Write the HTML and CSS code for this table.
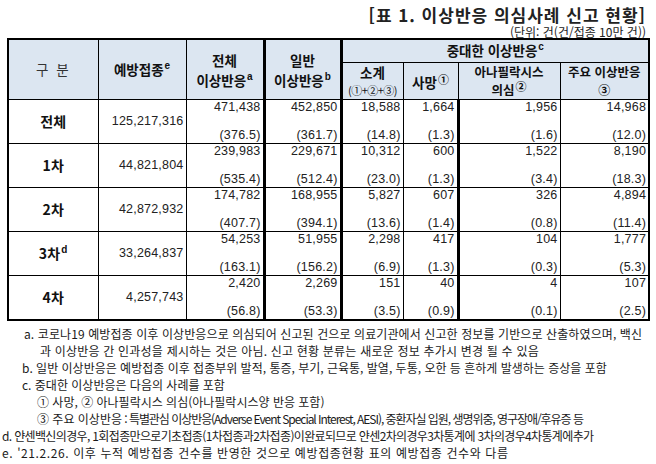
FILE: index.html
```html
<!DOCTYPE html>
<html lang="ko">
<head>
<meta charset="utf-8">
<title>이상반응 의심사례 신고 현황</title>
<link rel="stylesheet" href="styles.css">
</head>
<body>
<div class="page">
  <div class="title">[표 1. 이상반응 의심사례 신고 현황]</div>
  <div class="unit">(단위: 건(건/접종 10만 건))</div>
  <table class="tbl">
    <colgroup>
      <col class="w1"><col class="w2"><col class="w3"><col class="w4">
      <col class="w5"><col class="w6"><col class="w7"><col class="w8">
    </colgroup>
    <thead>
      <tr class="h1">
        <th rowspan="2" class="plain">구 분</th>
        <th rowspan="2">예방접종<sup>e</sup></th>
        <th rowspan="2" class="tr two">전체<br>이상반응<sup>a</sup></th>
        <th rowspan="2" class="tr two">일반<br>이상반응<sup>b</sup></th>
        <th colspan="4" class="major">중대한 이상반응<sup>c</sup></th>
      </tr>
      <tr class="h2">
        <th class="sub"><span class="sub1">소계</span><span class="small">(①+②+③)</span></th>
        <th class="lo">사망<sup class="circ">①</sup></th>
        <th class="top">아나필락시스<br>의심<sup class="circ">②</sup></th>
        <th class="top">주요 이상반응<br><span class="circ2">③</span></th>
      </tr>
    </thead>
    <tbody>
      <tr>
        <td class="lbl">전체</td>
        <td class="tot">125,217,316</td>
        <td class="tr"><div class="n">471,438</div><div class="p">(376.5)</div></td>
        <td class="tr"><div class="n">452,850</div><div class="p">(361.7)</div></td>
        <td><div class="n">18,588</div><div class="p">(14.8)</div></td>
        <td class="tr"><div class="n">1,664</div><div class="p">(1.3)</div></td>
        <td><div class="n">1,956</div><div class="p">(1.6)</div></td>
        <td><div class="n">14,968</div><div class="p">(12.0)</div></td>
      </tr>
      <tr>
        <td class="lbl">1차</td>
        <td class="tot">44,821,804</td>
        <td class="tr"><div class="n">239,983</div><div class="p">(535.4)</div></td>
        <td class="tr"><div class="n">229,671</div><div class="p">(512.4)</div></td>
        <td><div class="n">10,312</div><div class="p">(23.0)</div></td>
        <td class="tr"><div class="n">600</div><div class="p">(1.3)</div></td>
        <td><div class="n">1,522</div><div class="p">(3.4)</div></td>
        <td><div class="n">8,190</div><div class="p">(18.3)</div></td>
      </tr>
      <tr>
        <td class="lbl">2차</td>
        <td class="tot">42,872,932</td>
        <td class="tr"><div class="n">174,782</div><div class="p">(407.7)</div></td>
        <td class="tr"><div class="n">168,955</div><div class="p">(394.1)</div></td>
        <td><div class="n">5,827</div><div class="p">(13.6)</div></td>
        <td class="tr"><div class="n">607</div><div class="p">(1.4)</div></td>
        <td><div class="n">326</div><div class="p">(0.8)</div></td>
        <td><div class="n">4,894</div><div class="p">(11.4)</div></td>
      </tr>
      <tr>
        <td class="lbl">3차<sup>d</sup></td>
        <td class="tot">33,264,837</td>
        <td class="tr"><div class="n">54,253</div><div class="p">(163.1)</div></td>
        <td class="tr"><div class="n">51,955</div><div class="p">(156.2)</div></td>
        <td><div class="n">2,298</div><div class="p">(6.9)</div></td>
        <td class="tr"><div class="n">417</div><div class="p">(1.3)</div></td>
        <td><div class="n">104</div><div class="p">(0.3)</div></td>
        <td><div class="n">1,777</div><div class="p">(5.3)</div></td>
      </tr>
      <tr>
        <td class="lbl">4차</td>
        <td class="tot">4,257,743</td>
        <td class="tr"><div class="n">2,420</div><div class="p">(56.8)</div></td>
        <td class="tr"><div class="n">2,269</div><div class="p">(53.3)</div></td>
        <td><div class="n">151</div><div class="p">(3.5)</div></td>
        <td class="tr"><div class="n">40</div><div class="p">(0.9)</div></td>
        <td><div class="n">4</div><div class="p">(0.1)</div></td>
        <td><div class="n">107</div><div class="p">(2.5)</div></td>
      </tr>
    </tbody>
  </table>
  <div class="notes">
    <div class="note na">a. 코로나19 예방접종 이후 이상반응으로 의심되어 신고된 건으로 의료기관에서 신고한 정보를 기반으로 산출하였으며, 백신</div>
    <div class="note ncont">과 이상반응 간 인과성을 제시하는 것은 아님. 신고 현황 분류는 새로운 정보 추가시 변경 될 수 있음</div>
    <div class="note nb">b. 일반 이상반응은 예방접종 이후 접종부위 발적, 통증, 부기, 근육통, 발열, 두통, 오한 등 흔하게 발생하는 증상을 포함</div>
    <div class="note nb">c. 중대한 이상반응은 다음의 사례를 포함</div>
    <div class="note nsub">① 사망, ② 아나필락시스 의심(아나필락시스양 반응 포함)</div>
    <div class="note nsub">③ 주요 이상반응<span class="cond3"> : 특별관심 이상반응(Adverse Event Special Interest, AESI), 중환자실 입원, 생명위중, 영구장애/후유증 등</span></div>
    <div class="note nd cond">d. 얀센백신의경우, 1회접종만으로기초접종(1차접종과2차접종)이완료되므로 얀센2차의경우3차통계에 3차의경우4차통계에추가</div>
    <div class="note nd wide">e. '21.2.26. 이후 누적 예방접종 건수를 반영한 것으로 예방접종현황 표의 예방접종 건수와 다름</div>
  </div>
</div>
</body>
</html>
```

FILE: styles.css
```css
html, body {
  margin: 0;
  padding: 0;
  background: #ffffff;
}

body {
  font-family: "Liberation Sans", "Noto Sans CJK KR", sans-serif;
  color: #1a1a1a;
}

.page {
  width: 656px;
  height: 464px;
  overflow: hidden;
}

.title {
  margin-top: 5px;
  padding-right: 10px;
  text-align: right;
  font-family: "Noto Sans CJK KR", sans-serif;
  font-weight: bold;
  font-size: 17px;
  line-height: 19px;
  letter-spacing: 1px;
  color: #222;
}

.unit {
  margin-top: 1px;
  padding-right: 10px;
  text-align: right;
  font-family: "Noto Sans CJK KR", sans-serif;
  font-size: 12px;
  line-height: 13px;
  color: #222;
}

.tbl {
  margin-left: 7px;
  width: 641px;
  table-layout: fixed;
  border-collapse: collapse;
  border: 2px solid #000;
}

.w1 { width: 90px; }
.w2 { width: 88px; }
.w3 { width: 78px; }
.w4 { width: 77px; }
.w5 { width: 62px; }
.w6 { width: 55px; }
.w7 { width: 102px; }
.w8 { width: 89px; }

.tbl th {
  background: #dce6f1;
  border: 1px solid #000;
  font-family: "Noto Sans CJK KR", sans-serif;
  font-weight: bold;
  font-size: 13.5px;
  line-height: 18px;
  color: #111;
  padding: 0;
  text-align: center;
  vertical-align: middle;
}

.tbl th.two {
  line-height: 20px;
  padding-top: 2px;
}

.tbl th.plain {
  font-weight: normal;
  color: #333;
  letter-spacing: 2px;
}

.h1 { height: 23px; }
.h2 { height: 36px; }

.tbl th.major {
  vertical-align: top;
  padding-top: 1px;
}

.tbl th.top {
  vertical-align: top;
  font-size: 12.5px;
  line-height: 18px;
  padding-top: 0;
}

.tbl th.lo {
  padding-top: 2px;
}

.tbl th.sub {
  vertical-align: top;
}

.sub1 {
  display: block;
  line-height: 19px;
}

.small {
  display: block;
  font-weight: normal;
  font-size: 11px;
  line-height: 16px;
  letter-spacing: -0.5px;
}

.tbl sup {
  font-family: "Liberation Sans", sans-serif;
  font-weight: bold;
  font-size: 10px;
  line-height: 0;
  vertical-align: 6px;
  margin-left: 1px;
}

.tbl sup.circ {
  font-family: "Noto Sans CJK KR", sans-serif;
  font-size: 11px;
  vertical-align: 4px;
}

.circ2 {
  font-size: 12px;
}

.tbl td {
  border: 1px solid #000;
  height: 43px;
  padding: 0 2px 0 0;
  text-align: right;
  vertical-align: top;
  font-size: 12.5px;
  color: #222;
  letter-spacing: 0.2px;
}

.tbl .tr {
  border-right: 3px solid #000;
}

.tbl td.lbl {
  text-align: center;
  vertical-align: middle;
  padding: 0;
  font-family: "Noto Sans CJK KR", sans-serif;
  font-weight: bold;
  font-size: 14px;
  color: #111;
}

.tbl td.tot {
  vertical-align: middle;
}

.n {
  line-height: 14px;
}

.p {
  margin-top: 14px;
  line-height: 14px;
}

.notes {
  margin-top: 4px;
  font-family: "Noto Sans CJK KR", sans-serif;
  font-size: 12px;
  color: #1a1a1a;
}

.note {
  line-height: 17px;
  white-space: nowrap;
}

.na { padding-left: 24px; letter-spacing: 0.1px; }
.ncont { padding-left: 40px; letter-spacing: 0.2px; }
.nb { padding-left: 22px; }
.nsub { padding-left: 37px; }
.nd { padding-left: 2px; }

.cond {
  letter-spacing: -0.65px;
}

.cond3 {
  letter-spacing: -1.05px;
}

.wide {
  letter-spacing: 0.6px;
}
```
